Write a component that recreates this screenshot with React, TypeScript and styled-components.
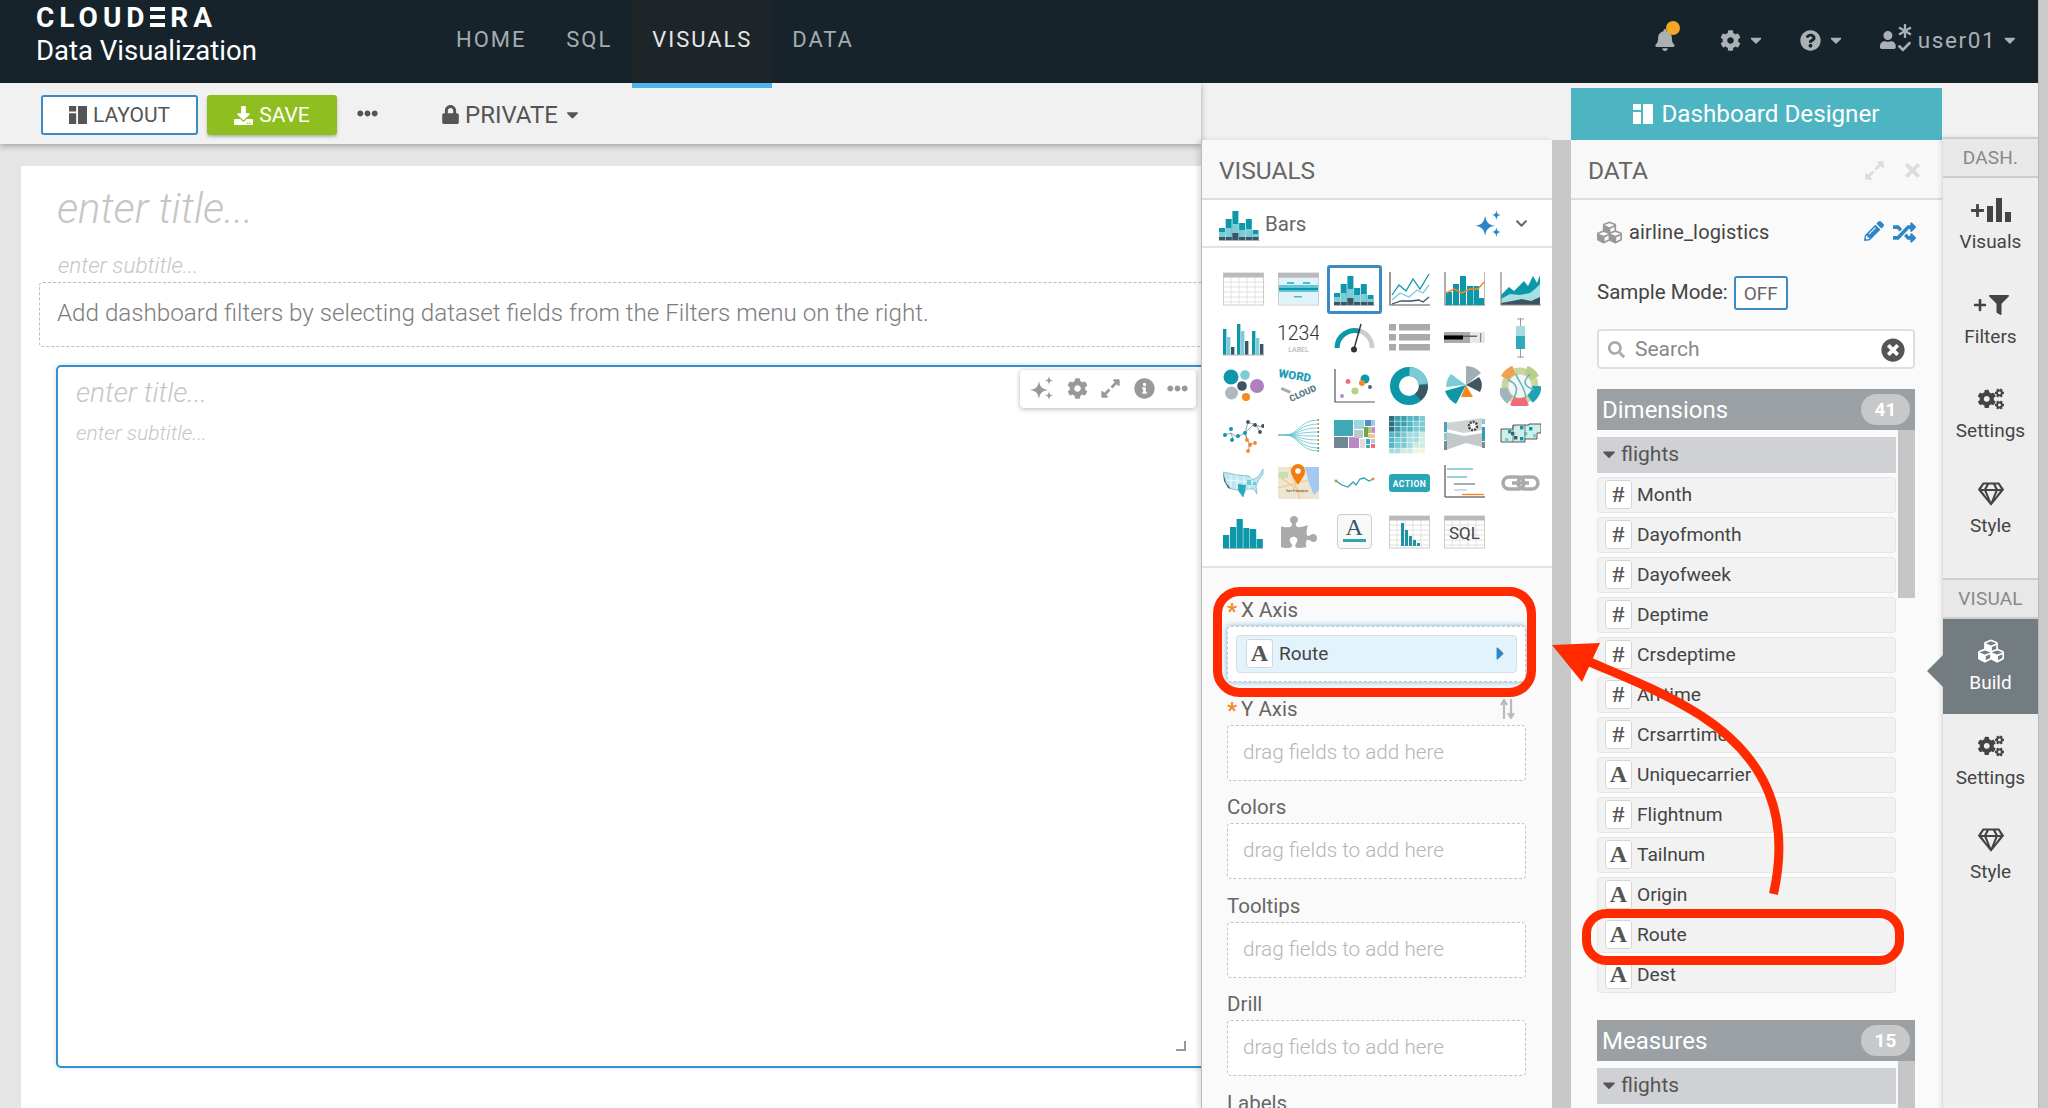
import React from "react";
import styled, { createGlobalStyle } from "styled-components";
import {
  FaBell, FaCog, FaCogs, FaQuestionCircle, FaCaretDown, FaCaretRight, FaLock, FaDownload, FaEllipsisH, FaCubes,
  FaPencilAlt, FaRandom, FaSearch, FaTimesCircle, FaTimes, FaExpandAlt, FaRegGem, FaFilter, FaInfoCircle,
  FaUser, FaAsterisk, FaCheck, FaChevronDown, FaPlus, FaPuzzlePiece,
} from "react-icons/fa";

const Global = createGlobalStyle`
  html, body { margin: 0; padding: 0; overflow: hidden; background: #e5e5e5; }
  body { font-family: Roboto, "Liberation Sans", sans-serif; }
  * { box-sizing: border-box; }
`;

const Page = styled.div`
  position: relative; display: flex; width: 2048px; height: 1108px; overflow: hidden; background: #e5e5e5;
`;
const Frame = styled.div`
  width: 2038px; height: 1108px; display: flex; flex-direction: column; flex: none;
`;
const PageScroll = styled.div`
  width: 10px; flex: none; background: #cbcbcb; border-left: 1px solid #bbb;
`;
const NavBar = styled.header`
  height: 83px; flex: none; display: flex; align-items: stretch; background: #16232b; color: #aab1b5; padding-left: 36px;
`;
const Logo = styled.div`
  width: 400px; flex: none; display: flex; flex-direction: column; color: #fff; padding-top: 3px;
`;
const LogoMark = styled.div`
  font-size: 28px; font-weight: 700; letter-spacing: 5px; line-height: 29px; font-family: Roboto, sans-serif;
`;
const LogoE = styled.span`
  display: inline-block; color: transparent;
  background: repeating-linear-gradient(180deg, #fff 0 4px, transparent 4px 8px);
  background-size: calc(100% - 5px) 20px; background-position: 0 4px; background-repeat: no-repeat;
`;
const LogoSub = styled.div`
  font-size: 27.5px; font-weight: 400; line-height: 34px; margin-top: 2px;
`;
const NavItem = styled.div<{ $active?: boolean }>`
  display: flex; align-items: center; padding: 0 20px 5px; font-size: 22px; letter-spacing: 1.95px; font-weight: 400;
  height: 88px; position: relative; z-index: 5;
  color: ${(p) => (p.$active ? "#e4e8ea" : "#a4acb0")};
  background: ${(p) => (p.$active ? "#1e2528" : "transparent")};
  border-bottom: 5px solid ${(p) => (p.$active ? "#4fb3f2" : "transparent")};
`;
const NavRight = styled.div`
  margin-left: auto; display: flex; align-items: center; padding: 0 20px 3px 0; font-size: 16px;
`;
const NavIcon = styled.span<{ $w: number }>`
  display: flex; align-items: center; width: ${(p) => p.$w}px; flex: none; position: relative; gap: 6px;
`;
const BellDot = styled.i`
  position: absolute; left: 12px; top: -8px; width: 14px; height: 14px; border-radius: 50%; background: #f5a623;
`;
const UserStack = styled.span`
  display: flex; flex-direction: column; align-items: center; gap: 2px; margin-left: -4px; margin-top: -3px;
`;
const UserName = styled.span`
  font-size: 22.5px; letter-spacing: 1.6px; margin-left: 0;
`;
const Body = styled.div`
  flex: 1; display: flex; min-height: 0;
`;
const LeftColumn = styled.div`
  width: 1201px; flex: none; display: flex; flex-direction: column; min-height: 0;
`;
const Toolbar = styled.div`
  height: 61px; flex: none; display: flex; align-items: center; padding: 3px 0 0 41px; background: #f1f1f1;
  box-shadow: 0 2px 6px rgba(0,0,0,.3); position: relative; z-index: 2; color: #555;
`;
const BaseButton = styled.button`
  height: 40px; border-radius: 3px; display: flex; align-items: center; justify-content: center; gap: 6px;
  font: 400 21px Roboto, sans-serif; padding: 0;
`;
const LayoutButton = styled(BaseButton)`
  width: 157px; background: #fff; border: 2px solid #3b8ac4; color: #555; margin-right: 9px;
`;
const SaveButton = styled(BaseButton)`
  width: 130px; background: #8fbe20; border: 0; color: #fff; box-shadow: 0 2px 3px rgba(0,0,0,.25);
`;
const DotsIcon = styled.span`
  display: flex; margin-left: 20px; color: #555; font-size: 21px; margin-top: -4px;
`;
const Privacy = styled.div`
  display: flex; align-items: center; gap: 5px; margin-left: 63px; font-size: 24px; color: #555; margin-top: -1px;
`;
const CanvasArea = styled.div`
  flex: 1; min-height: 0; padding: 22px 0 0 21px; display: flex;
`;
const Card = styled.main`
  flex: 1; background: #fff; overflow: hidden; display: flex; flex-direction: column; min-width: 0;
`;
const DashTitle = styled.div`
  font-size: 42px; font-style: italic; font-weight: 300; color: #c6c6c6; line-height: 46px; margin: 20px 0 0 36px;
`;
const DashSubtitle = styled.div`
  font-size: 22.5px; font-style: italic; font-weight: 300; color: #c6c6c6; line-height: 24px; margin: 21px 0 0 37px;
`;
const FilterBox = styled.div`
  flex: none; height: 65px; margin: 5px -30px 0 18px; border: 1.5px dashed #bdbdbd; border-radius: 4px;
  display: flex; align-items: center; padding: 0 0 4px 17px; font-size: 24.2px; font-weight: 300; color: #7d7d7d;
`;
const Widget = styled.section`
  position: relative; flex: none; height: 703px; margin: 18px -30px 0 35px; border: 2px solid #3a8fc9; border-radius: 5px;
  box-shadow: 0 0 5px rgba(59,138,196,.25); padding: 9px 0 0 18px;
`;
const WidgetTitle = styled.div`
  font-size: 28px; font-style: italic; font-weight: 300; color: #c6c6c6; line-height: 34px;
`;
const WidgetSubtitle = styled.div`
  font-size: 21px; font-style: italic; font-weight: 300; color: #c6c6c6; line-height: 24px; margin-top: 11px;
`;
const WidgetTools = styled.div`
  position: absolute; top: 3px; right: 33px; height: 38px; width: 176px; background: #fff; border-radius: 4px;
  box-shadow: 0 1px 5px rgba(0,0,0,.3); display: flex; align-items: center; justify-content: space-between; padding: 0 8px 2px 10px;
  color: #999; font-size: 21px;
`;
const ResizeHandle = styled.i`
  position: absolute; right: 43px; bottom: 15px; width: 10px; height: 10px; border-right: 2px solid #999; border-bottom: 2px solid #999;
`;

const Column = styled.div<{ $w: number; $top: number }>`
  width: ${(p) => p.$w}px; flex: none; display: flex; flex-direction: column; padding-top: ${(p) => p.$top}px;
  background: #f1f1f1; min-height: 0; position: relative;
`;
const Panel = styled.section<{ $line?: boolean }>`
  flex: 1; min-height: 0; background: #fafafa; overflow: hidden; display: flex; flex-direction: column;
  ${(p) => p.$line && "border-left: 1px solid #bbb; box-shadow: -3px 0 5px rgba(0,0,0,.12); position: relative; z-index: 3;"}
`;
const PanelHead = styled.div`
  height: 60px; flex: none; display: flex; align-items: center; background: #f8f8f8; border-bottom: 2px solid #ddd;
  font-size: 24.5px; color: #666; padding: 2px 17px 0;
`;
const Gutter = styled.div`
  flex: 1; background: #c8c8c8;
`;
const ChartPicker = styled.div`
  height: 48px; flex: none; display: flex; align-items: center; background: #fff; border-bottom: 2px solid #e3e3e3; padding: 1px 0 0 17px;
  font-size: 20.5px; color: #666;
`;
const PickerLabel = styled.span`
  margin-left: 5px;
`;
const PickerTail = styled.span`
  margin-left: auto; display: flex; align-items: center; gap: 13px; padding-right: 24px; color: #666; font-size: 13px;
`;
const IconGrid = styled.div`
  flex: none; height: 320px; background: #fff; border-bottom: 2px solid #e3e3e3; padding: 17px 0 0 14px;
  display: grid; grid-template-columns: repeat(6, 55.3px); grid-auto-rows: 48.5px;
`;
const IconCell = styled.div<{ $on?: boolean }>`
  display: flex; align-items: center; justify-content: center; border-radius: 3px;
  ${(p) => (p.$on ? "box-shadow: inset 0 0 0 3px #3b8ac4;" : "")}
`;
const Shelves = styled.div`
  padding: 30px 0 0 25px; display: flex; flex-direction: column;
`;
const ShelfLabel = styled.div`
  height: 24px; flex: none; display: flex; align-items: center; font-size: 20.5px; color: #666; width: 299px; position: relative;
`;
const Star = styled.b`
  color: #f5891f; font-weight: 700; font-size: 22px; width: 14px; height: 24px; line-height: 28px;
`;
const SortIcon = styled.span`
  margin-left: auto; margin-right: 11px; color: #bbb; display: flex;
`;
const Drop = styled.div<{ $on?: boolean }>`
  width: 299px; height: 56px; flex: none; border: 1.5px dashed #c4c4c4; border-radius: 4px; background: #fff;
  display: flex; align-items: center; padding: ${(p) => (p.$on ? "0 8px" : "0 0 2px 15px")}; margin: 4px 0 14.5px;
  font-size: 20.7px; font-weight: 300; color: #b5b5b5;
  ${(p) => p.$on && "box-shadow: 0 0 6px #74b5de;"}
`;
const DropPill = styled.div`
  flex: 1; height: 38px; background: #e3f3fc; border: 1.5px solid #dcdcdc; border-radius: 4px; display: flex; align-items: center;
  padding: 0 5px 1px 9px; color: #444; font-weight: 400; font-size: 19px; gap: 6px;
`;
const PillCaret = styled.span`
  margin-left: auto; color: #2e86c8; display: flex; font-size: 21px;
`;
const TypeBox = styled.span`
  width: 27px; height: 29px; flex: none; background: #fff; border: 1.5px solid #d6d6d6; border-radius: 3px; display: flex; align-items: center;
  justify-content: center; font: 700 24px "Liberation Serif", serif; color: #555;
`;
const DataRow = styled.div`
  height: 64.5px; flex: none; display: flex; align-items: center; padding: 0 26px 0 26px; font-size: 20px; color: #444; background: #fafafa;
`;
const DataName = styled.span`
  margin-left: 7px; letter-spacing: .15px;
`;
const DataTools = styled.span`
  margin-left: auto; display: flex; gap: 9px; color: #2e86c8; font-size: 20px;
`;
const HeadTools = styled.span`
  margin-left: auto; display: flex; align-items: center; gap: 17px; color: #ddd; font-size: 21px; padding-right: 2px;
`;
const SampleRow = styled.div`
  height: 34px; flex: none; display: flex; align-items: center; gap: 6px; margin: 11.5px 0 0 26px; font-size: 20.5px; color: #444;
`;
const SampleText = styled.span`
  margin-top: -2px;
`;
const OffButton = styled.span`
  width: 54px; height: 34px; border: 2px solid #3b8ac4; border-radius: 3px; background: #fff; display: flex; align-items: center; justify-content: center;
  font-size: 19px; color: #666; padding-top: 1px;
`;
const SearchBox = styled.div`
  height: 40px; flex: none; margin: 19px 0 0 26px; width: 318px; border: 2px solid #dfdfdf; border-radius: 4px; background: #fff;
  display: flex; align-items: center; padding: 0 8px 0 9px; color: #888; font-size: 21px; gap: 10px;
`;
const SearchClear = styled.span`
  margin-left: auto; display: flex; color: #555; font-size: 24px; margin-top: 2px;
`;
const Section = styled.div<{ $mt: number }>`
  margin: ${(p) => p.$mt}px 0 0 26px; width: 318px; flex: none; display: flex; flex-direction: column;
`;
const SectionHead = styled.div`
  height: 41px; background: #9aa0a3; display: flex; align-items: center; color: #fff; font-size: 24px; padding: 0 5px 0 5px;
`;
const Count = styled.span`
  margin-left: auto; width: 49px; height: 31px; border-radius: 16px; background: #c6c8c9; color: #fff; font-weight: 700; font-size: 19px;
  display: flex; align-items: center; justify-content: center;
`;
const SectionBody = styled.div`
  display: grid; grid-template-columns: 299px 17px; column-gap: 2px;
`;
const FieldList = styled.div`
  padding-top: 7px; display: flex; flex-direction: column; gap: 3.5px;
`;
const Track = styled.div`
  background: #c6c6c6; height: 168px;
`;
const Group = styled.div`
  height: 36px; background: #cfd1d4; display: flex; align-items: center; padding: 0 0 2px 2px; color: #555; font-size: 21px; gap: 2px;
`;
const FieldRow = styled.div`
  height: 36.5px; background: #f2f2f2; border: 1.5px solid #e6e6e6; border-radius: 4px; display: flex; align-items: center; padding-left: 7px;
  gap: 5px; font-size: 19.2px; color: #444;
`;
const Rail = styled.nav`
  flex: 1; display: flex; flex-direction: column; background: #eee; border-left: 1px solid #ddd; box-shadow: -2px 0 4px rgba(0,0,0,.08); position: relative; z-index: 2;
`;
const RailHead = styled.div`
  height: 41px; flex: none; background: #e8e8e8; border-top: 2px solid #cdcdcd; border-bottom: 2px solid #cdcdcd; display: flex; align-items: center; justify-content: center;
  color: #888; font-size: 19px; letter-spacing: .2px;
`;
const RailItem = styled.div<{ $active?: boolean }>`
  height: 94.5px; flex: none; display: flex; flex-direction: column; align-items: center; position: relative; padding-top: 17px;
  font-size: 19px; color: ${(p) => (p.$active ? "#fff" : "#444")}; background: ${(p) => (p.$active ? "#737c80" : "transparent")};
`;
const RailIconBox = styled.span`
  height: 30px; display: flex; align-items: center; justify-content: center; margin-bottom: 5px; font-size: 26px; color: inherit; gap: 2px;
`;
const RailPad = styled.div`
  height: 22px; flex: none;
`;
const RailArrow = styled.i`
  position: absolute; left: -16px; top: 36px; border: solid transparent; border-width: 16.5px 16px 16.5px 0; border-right-color: #737c80;
`;
const Banner = styled.div`
  height: 52px; flex: none; background: #4db4c2; display: flex; align-items: center; justify-content: center; gap: 8px; color: #fff; font-size: 24.2px;
`;
const Annotation = styled.svg`
  position: absolute; left: 0; top: 0; width: 2048px; height: 1108px; pointer-events: none; z-index: 10;
`;

const T = "#0e97a9", L = "#7ccbd6", D = "#3e5462", G = "#b3b3b3", O = "#f5891f";

const TableBase = () => (
  <>
    <rect x=".5" y="4" width="40" height="32" fill="#fff" stroke="#ccc" />
    {[13, 18, 23, 28, 33].map((y) => <line key={y} x1="1" x2="40" y1={y} y2={y} stroke="#e0e0e0" />)}
    {[8, 16, 24, 32].map((x) => <line key={x} y1="8" y2="36" x1={x} x2={x} stroke="#e0e0e0" />)}
    <rect x=".5" y="4" width="40" height="4.500" fill="#b9b9b9" />
  </>
);
const Stacked = () => {
  const data = [[12, 3, 5], [21, 3, 9], [29, 7, 9], [17, 3, 7], [21, 3, 8], [10, 3, 3]];
  return (
    <>
      {data.map(([h, d, l], i) => (
        <g key={i}>
          <rect x={i * 6.7} y={36 - h} width="6" height={h} fill={T} />
          <rect x={i * 6.7} y={36 - d - l} width="6" height={l} fill={L} />
          <rect x={i * 6.7} y={36 - d} width="6" height={d} fill={D} />
        </g>
      ))}
      <rect x="0" y="36" width="40.500" height="1" fill={G} />
    </>
  );
};
const Axis = ({ c = "#555" }: { c?: string }) => <polyline points="1,3 1,36 41,36" fill="none" stroke={c} strokeWidth="1.200" />;
const Poly = ({ p, c, w = 1.3 }: { p: string; c: string; w?: number | string }) => <polyline points={p} fill="none" stroke={c} strokeWidth={w} />;
const ChartText = styled.text`
  font-family: Roboto, sans-serif;
`;
const heatShades = ["#2b6f80", "#3aa0b0", "#55b5c2", "#7cc9d2", "#a5dcdf", "#d0ece0", "#eef8dc"];

const chartIcons: React.ReactNode[] = [
  <TableBase />,
  <>
    <TableBase />
    <rect x="1" y="9" width="39" height="26" fill="#dff3f8" opacity=".9" />
    <rect x="1" y="16" width="39" height="7" fill="#62c6d6" />
    <rect x="1" y="19" width="39" height="2" fill={T} />
    <rect x="9" y="13" width="7" height="2" fill="#4db9ca" /><rect x="25" y="13" width="7" height="2" fill="#4db9ca" /><rect x="16" y="27" width="8" height="1.500" fill="#4db9ca" />
    <rect x="0" y="4" width="40.500" height="4.500" fill="#b9b9b9" />
  </>,
  <Stacked />,
  <>
    <Axis />
    <Poly p="3,26 10,16 17,22 24,10 31,20 40,5" c={T} />
    <Poly p="3,31 11,24 20,28 28,21 34,24 40,16" c={L} />
    <Poly p="3,35 12,32 22,32 30,31 34,33 40,28" c={D} />
  </>,
  <>
    <Axis c="#777" />
    <rect x="2" y="23" width="6" height="13" fill={T} /><rect x="9" y="15" width="6" height="21" fill={T} /><rect x="16" y="7" width="6" height="29" fill={T} />
    <rect x="23" y="17" width="6" height="19" fill={T} /><rect x="29.500" y="17" width="5.500" height="19" fill={T} /><rect x="35" y="29" width="5" height="7" fill={T} />
    <Poly p="2,24 10,20 18,24 26,20 34,20 40,13" c={O} w="1.500" />
    <line x1="41" y1="3" x2="41" y2="36" stroke="#777" />
  </>,
  <>
    <polygon points="1,26 9,18 14,22 24,12 28,17 33,7 37,14 40,6 40,36 1,36" fill={T} />
    <polygon points="1,30 10,25 20,26 30,24 35,20 40,15 40,36 1,36" fill="#a6dfe4" />
    <polygon points="1,34 12,32 22,30 31,32 40,28 40,36 1,36" fill={D} />
    <Axis c="#888" />
  </>,
  <>
    {[[0, 26, T], [4, 18, L], [8, 8, D], [14, 31, T], [18, 24, L], [22, 14, D], [29, 24, T], [33, 17, L], [37, 11, D]].map(([x, h, c], i) => (
      <rect key={i} x={x as number} y={37 - (h as number)} width="3.400" height={h as number} fill={c as string} />
    ))}
    <rect y="36.500" width="41" height="1" fill={G} />
  </>,
  <>
    <ChartText x="20.500" y="22" textAnchor="middle" fontSize="19.500" fontWeight="300" fill="#333">1234</ChartText>
    <ChartText x="20.500" y="34" textAnchor="middle" fontSize="7" fill="#aaa">LABEL</ChartText>
  </>,
  <>
    <path d="M26 13 A17 17 0 0 1 38 30" fill="none" stroke="#ccc" strokeWidth="4.500" />
    <path d="M3 30 A17.500 17.500 0 0 1 26 13.500" fill="none" stroke={T} strokeWidth="5" />
    <path d="M27 6 L20 31" stroke="#333" strokeWidth="1.400" />
    <circle cx="20" cy="31.500" r="3" fill="#333" />
  </>,
  <>
    {[6, 16, 26].map((y) => (
      <g key={y}>
        <rect x="0" y={y} width="7" height="6.500" fill="#aaa" />
        <rect x="10" y={y} width="31" height="6.500" fill="#aaa" />
      </g>
    ))}
  </>,
  <>
    <rect x="0" y="14" width="41" height="11" fill="#e8e8e8" />
    <rect x="0" y="14" width="26" height="11" fill="#aaa" />
    <rect x="0" y="17.500" width="33" height="1.500" fill="#666" />
    <rect x="0" y="17.500" width="19" height="4" fill="#000" />
    <rect x="36" y="15" width="1.200" height="9" fill="#888" />
  </>,
  <>
    <line x1="20.500" y1="0" x2="20.500" y2="40" stroke="#999" />
    <line x1="17" y1="1" x2="24" y2="1" stroke="#999" /><line x1="17" y1="39" x2="24" y2="39" stroke="#999" />
    <rect x="16" y="8" width="9" height="10" fill="#a5dae0" /><rect x="16" y="18" width="9" height="13" fill="#2faabb" />
  </>,
  <>
    <circle cx="8" cy="11" r="7.500" fill={T} /><circle cx="22" cy="9" r="4.800" fill={L} /><circle cx="19" cy="20" r="4.800" fill={D} />
    <circle cx="34" cy="20" r="7" fill="#b07fbe" /><circle cx="8.500" cy="27" r="6.500" fill="#b0b9bd" /><circle cx="23" cy="31" r="4" fill={O} />
  </>,
  <>
    <ChartText x="0" y="11" fontSize="11.500" fontWeight="900" fill="#1f9db0" transform="rotate(9 0 11)">WORD</ChartText>
    <ChartText x="13" y="36" fontSize="9" fontWeight="900" fill="#5c7a88" transform="rotate(-24 13 36)">CLOUD</ChartText>
    <rect x="3" y="23" width="10" height="3" fill="#aaa" transform="rotate(24 8 24)" />
  </>,
  <>
    <Axis />
    <circle cx="31" cy="13" r="4.500" fill={T} /><circle cx="28" cy="17" r="3" fill={O} /><circle cx="14" cy="15.500" r="2.400" fill="#ef6b78" />
    <circle cx="21" cy="25" r="3.600" fill="#b7d486" /><circle cx="36" cy="21" r="2" fill="#4d6672" /><circle cx="8" cy="30" r="2" fill="#b88bc6" />
  </>,
  <>
    <circle cx="20" cy="20" r="14.500" fill="none" stroke={T} strokeWidth="9" />
    <path d="M20.500 5.500 A14.500 14.500 0 0 1 34.300 18" fill="none" stroke={L} strokeWidth="9" />
    <path d="M34.400 19 A14.500 14.500 0 0 1 29 31" fill="none" stroke="#3f5560" strokeWidth="9" />
  </>,
  <>
    <path d="M22 19 L22 0 A20 20 0 0 1 37 7 Z" fill="#a0adb3" />
    <path d="M22 19 L35 11 A14 14 0 0 1 36 26 Z" fill="#3f5560" />
    <path d="M22 19 L29 31 L17 31 Z" fill={O} />
    <path d="M22 19 L12 38 A24 24 0 0 1 1 25 Z" fill={T} />
    <path d="M22 19 L7 8 A20 20 0 0 0 2 21 Z" fill={L} />
  </>,
  <>
    <circle cx="20" cy="20" r="15" fill="#f4f4f4" stroke="#c9d6a0" strokeWidth="7" />
    <path d="M5 12 A17 17 0 0 1 14 4" fill="none" stroke="#f0a050" strokeWidth="9" />
    <path d="M3 22 A17 17 0 0 0 10 34" fill="none" stroke="#9fb4bb" strokeWidth="9" />
    <path d="M12 35 A17 17 0 0 0 27 35" fill="none" stroke="#ef6b78" strokeWidth="9" />
    <path d="M30 33 A17 17 0 0 0 37 20" fill="none" stroke="#20a0b5" strokeWidth="9" />
    <path d="M26 4 A17 17 0 0 1 35 12" fill="none" stroke="#b7cf88" strokeWidth="9" />
    <path d="M8 14 C18 18 18 24 14 32 M30 8 C22 16 24 20 34 24 M16 8 C18 16 24 18 26 32" fill="none" stroke="#5ab6c4" strokeWidth="1.500" />
  </>,
  <>
    <g stroke="#7c8f97" strokeWidth=".8">
      <path d="M2 20 L8 18 L10 24 M8 18 L14 22 L22 18 L25 7 L32 10 L40 12 M22 18 L32 8 L37 17 M22 18 L26 28 L30 29 M26 28 L26 36 M22 18 L24 26" fill="none" />
    </g>
    {[[2, 20, T], [8, 14, T], [9, 25, T], [15, 21, T], [22, 18, T]].map(([x, y, c], i) => <circle key={i} cx={x as number} cy={y as number} r="2" fill={c as string} />)}
    {[[25, 7], [32, 10], [40, 11], [37, 17]].map(([x, y], i) => <circle key={i} cx={x} cy={y} r="1.900" fill={D} />)}
    {[[24, 25], [27, 30], [32, 28], [25, 36]].map(([x, y], i) => <circle key={i} cx={x} cy={y} r="1.900" fill={O} />)}
  </>,
  <>
    <path d="M0 20 L10 20" stroke={L} strokeWidth="2" />
    {[5, 9, 13, 17, 21, 25, 29, 33, 36].map((y) => (
      <path key={y} d={`M8 20 C 20 20, 22 ${y}, 40 ${y}`} fill="none" stroke="#62c2cf" strokeWidth=".8" />
    ))}
    {[5, 9, 13, 17, 21, 25, 29, 33, 36].map((y, i) => <rect key={y} x="39.500" y={y - 1} width="1.500" height="2" fill={["#7cb342", O, "#e57373", T][i % 4]} />)}
  </>,
  <>
    <rect x="0" y="5" width="19" height="16" fill="#3fa9b8" /><rect x="0" y="22" width="14" height="11" fill="#6f8791" />
    <rect x="20" y="5" width="10" height="9" fill="#9cd6dc" /><rect x="15" y="22" width="10" height="11" fill="#bb86c4" /><rect x="20" y="15" width="9" height="8" fill="#bcc8cc" />
    <rect x="31" y="5" width="8" height="6" fill="#4f8fc4" /><rect x="37" y="5" width="4" height="6" fill="#a5c8e4" />
    <rect x="30" y="12" width="4" height="10" fill="#6fa845" /><rect x="34" y="12" width="3.500" height="6" fill="#a8d070" /><rect x="37.500" y="12" width="3.500" height="6" fill="#c08fd0" />
    <rect x="34" y="19" width="7" height="4" fill="#f7c08f" /><rect x="26" y="24" width="5" height="9" fill="#dcdcdc" /><rect x="32" y="24" width="4" height="5" fill="#3fa9b8" />
    <rect x="37" y="24" width="4" height="4" fill="#bcc8cc" /><rect x="37" y="29" width="4" height="4" fill="#ef6b78" /><rect x="32" y="30" width="4" height="3" fill="#3fa9b8" />
  </>,
  <>
    {Array.from({ length: 42 }).map((_, i) => {
      const r = Math.floor(i / 6), c = i % 6;
      const s = heatShades[Math.min(6, Math.max(0, Math.round((r + c) * 0.6 - ((r * 7 + c * 3) % 3) * 0.4)))];
      return <rect key={i} x={c * 6.1} y={1 + r * 5.4} width="5.500" height="4.900" fill={s} />;
    })}
  </>,
  <>
    <polygon points="2,8 38,3 38,15 20,18 2,14" fill="#cfd3d4" />
    <polygon points="2,17 20,21 38,18 38,32 22,28 2,35" fill="#c3c8ca" />
    <rect x="0" y="7" width="3" height="10" fill="#49a5b4" /><rect x="0" y="18" width="3" height="7" fill="#8cc8d2" /><rect x="0" y="26" width="3" height="9" fill="#7a8b92" />
    <rect x="38" y="4" width="3" height="5" fill="#8cc8d2" /><rect x="38" y="12" width="3" height="14" fill="#2aa0b2" /><rect x="38" y="27" width="3" height="6" fill="#7a8b92" />
    <circle cx="29" cy="11" r="4" fill="#fff" stroke="#444" strokeWidth="2.600" strokeDasharray="2 1" />
  </>,
  <>
    <polygon points="1,14 13,14 13,10 29,10 29,9 41,9 41,18 37,18 37,24 25,24 25,27 1,27" fill="#cfeee5" stroke="#444" strokeWidth=".9" />
    {[[8, 15, T], [14, 21, D], [20, 11, T], [24, 17, L], [29, 12, T], [33, 19, L], [5, 23, L], [11, 17, "#2b6f80"], [20, 22, T]].map(([x, y, c], i) => <rect key={i} x={x as number} y={y as number} width="3.400" height="3.400" fill={c as string} />)}
    <path d="M13 10 V27 M25 10 V24" stroke="#555" strokeWidth=".7" />
  </>,
  <>
    <path d="M0 9 L14 12 L26 13 L29 17 L33 15 L36 13 L40 6 L40 11 L35 18 L33 23 L34 31 L31 26 L24 26 L22 28 L20 34 L15 27 L8 26 L3 20 L1 13 Z" fill="#bfe7ef" stroke="#6bbdcd" strokeWidth=".8" />
    <path d="M0 10 L3 20 L8 26 L5 25 L1 18 Z" fill="#46646f" />
    <path d="M15 21 L23 22 L22 28 L20 34 L15 27 Z" fill="#2caabc" />
    <path d="M8 12 V25 M14 12 V26 M21 13 V22 M27 15 L26 26 M3 17 L30 19" stroke="#fff" strokeWidth=".7" />
    <rect x="24" y="17" width="4" height="5" fill="#6fcad8" /><rect x="30" y="19" width="3" height="3" fill="#6fcad8" />
  </>,
  <>
    <rect x="0" y="4" width="41" height="32" fill="#eee5d3" />
    <polygon points="27,4 41,4 41,27 36,32 31,20" fill="#a5c8f2" />
    <path d="M0 25 L30 17 M12 4 L22 36 M0 13 L25 30" stroke="#f0c97e" strokeWidth="1.200" />
    <rect x="1" y="9" width="9" height="6" fill="#c7dfb0" />
    <ChartText x="19" y="29" fontSize="3.500" textAnchor="middle" fill="#444">San Francisco</ChartText>
    <path d="M20 22 C15 14 13 12 13 8 A7 7 0 0 1 27 8 C27 12 25 14 20 22 Z" fill="#f47b0e" /><circle cx="20" cy="8" r="2.800" fill="#fff" />
  </>,
  <>
    <Poly p="2,18 8,22 14,24 19,19 22,22 26,16 30,15 35,18 39,16" c="#2f9fb3" />
    <circle cx="2" cy="18" r="1.400" fill="#7cb342" /><circle cx="39" cy="16" r="1.400" fill={O} />
  </>,
  <>
    <rect x="0" y="11" width="41" height="18" rx="3" fill="#2ba6b6" />
    <ChartText x="20.500" y="23.500" textAnchor="middle" fontSize="8.500" fontWeight="700" letterSpacing=".5" fill="#fff">ACTION</ChartText>
  </>,
  <>
    <polyline points="1,2 1,34 41,34" fill="none" stroke="#333" strokeWidth="1" />
    <path d="M3 6 H29 M3 14 H23" strokeWidth="1.200" fill="none" stroke="#2f9fb3" />
    <path d="M10 21 H31" stroke="#5b7c8a" strokeWidth="1.200" /><path d="M10 27 H23" stroke="#a3cbd3" strokeWidth="1.200" /><path d="M18 31.500 H40" stroke={O} strokeWidth="1.400" />
  </>,
  <>
    <path d="M18 14 H9 A6 6 0 0 0 9 26 H18 A6 6 0 0 0 18 14 M24 14 H32 A6 6 0 0 1 32 26 H24 A6 6 0 0 1 24 14 M12 20 H29" fill="none" stroke="#aaa" strokeWidth="3.400" />
  </>,
  <>
    {[[0, 13], [7, 21], [13.6, 29], [20.3, 20], [27, 19], [33.6, 9]].map(([x, h], i) => <rect key={i} x={x} y={36 - h} width="6.200" height={h} fill={T} />)}
    <rect y="36" width="40" height="1" fill={G} />
  </>,
  null,
  null,
  <>
    <TableBase />
    {[[12, 23], [16, 16], [20, 10], [24, 6], [28, 3]].map(([x, h], i) => <rect key={i} x={x} y={33 - h + 1} width="3" height={h} fill="#1e93a6" />)}
  </>,
  <>
    <TableBase />
    <ChartText x="20.500" y="27" textAnchor="middle" fontSize="17" fill="#444">SQL</ChartText>
  </>,
];

const TextTile = styled.span`
  width: 35px; height: 35px; background: #f8f8f8; border: 1px solid #ccc; border-radius: 4px; display: flex; flex-direction: column; align-items: center; justify-content: flex-end;
  font: 400 24px/22px "Liberation Serif", serif; color: #3e5462; padding-bottom: 6px;
  &::after { content: ""; width: 23px; height: 3px; background: #2ba6b6; margin-top: 1px; }
`;

const Sparkle = ({ c, size }: { c: string; size: number }) => (
  <svg width={size} height={size} viewBox="0 0 24 24">
    <path d="M9 5 C10 11 12 13 18 14 C12 15 10 17 9 23 C8 17 6 15 0 14 C6 13 8 11 9 5 Z M19 0 C19.500 3 20 4 23 4.500 C20 5 19.500 6 19 9 C18.500 6 18 5 15 4.500 C18 4 18.500 3 19 0 Z M19 15 C19.500 18 20 19 23 19.500 C20 20 19.500 21 19 24 C18.500 21 18 20 15 19.500 C18 19 18.500 18 19 15 Z" fill={c} />
  </svg>
);
const Tiles = ({ size, c }: { size: number; c: string }) => (
  <svg width={size} height={size} viewBox="0 0 20 20">
    <path d="M0 0 H8 V6 H0 Z M0 8 H8 V20 H0 Z M10 0 H20 V20 H10 Z" fill={c} />
  </svg>
);
const Chart = ({ i, w = 41 }: { i: number; w?: number }) => (
  <svg width={w} height={w * 40 / 41} viewBox="0 0 41 40">{chartIcons[i]}</svg>
);

const fields: [string, string][] = [
  ["#", "Month"], ["#", "Dayofmonth"], ["#", "Dayofweek"], ["#", "Deptime"], ["#", "Crsdeptime"], ["#", "Arrtime"], ["#", "Crsarrtime"],
  ["A", "Uniquecarrier"], ["#", "Flightnum"], ["A", "Tailnum"], ["A", "Origin"], ["A", "Route"], ["A", "Dest"],
];

const shelves = ["Y Axis", "Colors", "Tooltips", "Drill"];

const SideItem = ({ icon, label, active }: { icon: React.ReactNode; label: string; active?: boolean }) => (
  <RailItem $active={active}>
    {active && <RailArrow />}
    <RailIconBox>{icon}</RailIconBox>
    {label}
  </RailItem>
);

export default function App() {
  return (
    <Page>
      <Global />
      <Frame>
        <NavBar>
          <Logo>
            <LogoMark>CLOUD<LogoE>E</LogoE>RA</LogoMark>
            <LogoSub>Data Visualization</LogoSub>
          </Logo>
          <NavItem>HOME</NavItem>
          <NavItem>SQL</NavItem>
          <NavItem $active>VISUALS</NavItem>
          <NavItem>DATA</NavItem>
          <NavRight>
            <NavIcon $w={66}><FaBell size={22} /><BellDot /></NavIcon>
            <NavIcon $w={80}><FaCog size={21} /><FaCaretDown size={18} /></NavIcon>
            <NavIcon $w={80}><FaQuestionCircle size={21} /><FaCaretDown size={18} /></NavIcon>
            <NavIcon $w={138}>
              <FaUser size={18} />
              <UserStack><FaAsterisk size={14} /><FaCheck size={13} /></UserStack>
              <UserName>user01</UserName>
              <FaCaretDown size={18} />
            </NavIcon>
          </NavRight>
        </NavBar>
        <Body>
          <LeftColumn>
            <Toolbar>
              <LayoutButton><Tiles size={18} c="#555" />LAYOUT</LayoutButton>
              <SaveButton><FaDownload size={19} />SAVE</SaveButton>
              <DotsIcon><FaEllipsisH /></DotsIcon>
              <Privacy><FaLock size={19} />PRIVATE<FaCaretDown size={19} /></Privacy>
            </Toolbar>
            <CanvasArea>
              <Card>
                <DashTitle>enter title...</DashTitle>
                <DashSubtitle>enter subtitle...</DashSubtitle>
                <FilterBox>Add dashboard filters by selecting dataset fields from the Filters menu on the right.</FilterBox>
                <Widget>
                  <WidgetTitle>enter title...</WidgetTitle>
                  <WidgetSubtitle>enter subtitle...</WidgetSubtitle>
                  <WidgetTools>
                    <Sparkle c="#999" size={24} /><FaCog /><FaExpandAlt /><FaInfoCircle /><FaEllipsisH />
                  </WidgetTools>
                  <ResizeHandle />
                </Widget>
              </Card>
            </CanvasArea>
          </LeftColumn>

          <Column $w={351} $top={57}>
            <Panel $line>
              <PanelHead>VISUALS</PanelHead>
              <ChartPicker>
                <Chart i={2} w={41} />
                <PickerLabel>Bars</PickerLabel>
                <PickerTail><Sparkle c="#2e86c8" size={27} /><FaChevronDown /></PickerTail>
              </ChartPicker>
              <IconGrid>
                {chartIcons.map((_, i) => (
                  <IconCell key={i} $on={i === 2}>
                    {i === 31 ? <FaPuzzlePiece size={36} color="#aaa" /> : i === 32 ? <TextTile>A</TextTile> : <Chart i={i} />}
                  </IconCell>
                ))}
              </IconGrid>
              <Shelves>
                <ShelfLabel><Star>*</Star>X Axis</ShelfLabel>
                <Drop $on>
                  <DropPill><TypeBox>A</TypeBox>Route<PillCaret><FaCaretRight /></PillCaret></DropPill>
                </Drop>
                {shelves.map((s, i) => (
                  <React.Fragment key={s}>
                    <ShelfLabel>
                      {i === 0 && <Star>*</Star>}{s}
                      {i === 0 && (
                        <SortIcon>
                          <svg width="15" height="20" viewBox="0 0 15 20"><path d="M4 20 V3 M1 6 L4 1 L7 6 M11 0 V17 M8 14 L11 19 L14 14" stroke="#bbb" strokeWidth="2.200" fill="none" /></svg>
                        </SortIcon>
                      )}
                    </ShelfLabel>
                    <Drop>drag fields to add here</Drop>
                  </React.Fragment>
                ))}
                <ShelfLabel>Labels</ShelfLabel>
              </Shelves>
            </Panel>
          </Column>

          <Column $w={19} $top={57}><Gutter /></Column>

          <Column $w={371} $top={5}>
            <Banner><Tiles size={20} c="#fff" />Dashboard Designer</Banner>
            <Panel>
              <PanelHead>DATA<HeadTools><FaExpandAlt /><FaTimes /></HeadTools></PanelHead>
              <DataRow>
                <FaCubes size={25} color="#999" />
                <DataName>airline_logistics</DataName>
                <DataTools><FaPencilAlt /><FaRandom size={23} /></DataTools>
              </DataRow>
              <SampleRow><SampleText>Sample Mode:</SampleText><OffButton>OFF</OffButton></SampleRow>
              <SearchBox><FaSearch size={17} color="#aaa" />Search<SearchClear><FaTimesCircle /></SearchClear></SearchBox>
              <Section $mt={20}>
                <SectionHead>Dimensions<Count>41</Count></SectionHead>
                <SectionBody>
                  <FieldList>
                    <Group><FaCaretDown size={20} />flights</Group>
                    {fields.map(([t, n]) => <FieldRow key={n}><TypeBox>{t}</TypeBox>{n}</FieldRow>)}
                  </FieldList>
                  <Track />
                </SectionBody>
              </Section>
              <Section $mt={27}>
                <SectionHead>Measures<Count>15</Count></SectionHead>
                <SectionBody>
                  <FieldList><Group><FaCaretDown size={20} />flights</Group></FieldList>
                  <Track />
                </SectionBody>
              </Section>
            </Panel>
          </Column>

          <Column $w={96} $top={54}>
            <Rail>
              <RailHead>DASH.</RailHead>
              <SideItem
                label="Visuals"
                icon={<><FaPlus size={15} /><svg width="24" height="24" viewBox="0 0 24 24"><path d="M0 8 H6 V24 H0 Z M9 0 H15 V24 H9 Z M18 14 H24 V24 H18 Z" fill="currentColor" /></svg></>}
              />
              <SideItem label="Filters" icon={<><FaPlus size={14} /><FaFilter size={20} /></>} />
              <SideItem label="Settings" icon={<FaCogs />} />
              <SideItem label="Style" icon={<FaRegGem />} />
              <RailPad />
              <RailHead>VISUAL</RailHead>
              <SideItem active label="Build" icon={<FaCubes />} />
              <SideItem label="Settings" icon={<FaCogs />} />
              <SideItem label="Style" icon={<FaRegGem />} />
            </Rail>
          </Column>
        </Body>
      </Frame>
      <PageScroll />
      <Annotation viewBox="0 0 2048 1108">
        <rect x="1217.500" y="591.500" width="314" height="101" rx="22" fill="none" stroke="#ff2a00" strokeWidth="9" />
        <rect x="1586.500" y="913.500" width="313" height="47" rx="20" fill="none" stroke="#ff2a00" strokeWidth="9" />
        <path d="M1773.500 894 C1790 820 1770 760 1700 715 C1660 690 1620 675 1585 660" fill="none" stroke="#ff2a00" strokeWidth="9" />
        <polygon points="1552,645 1600,643 1582,682" fill="#ff2a00" />
      </Annotation>
    </Page>
  );
}
